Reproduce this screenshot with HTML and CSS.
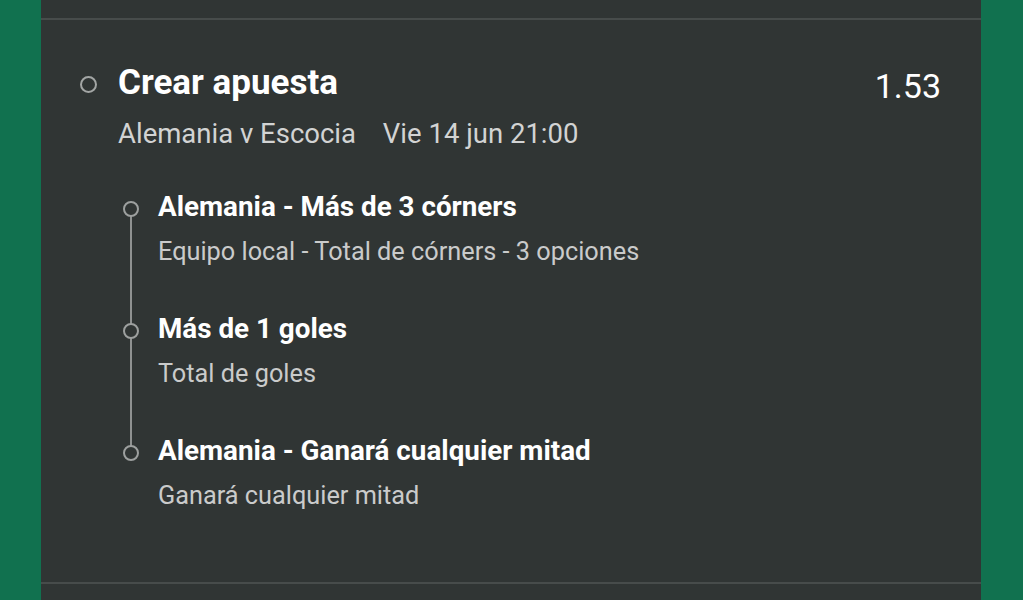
FILE: index.html
```html
<!DOCTYPE html>
<html lang="es">
<head>
    <meta charset="UTF-8">
    <meta name="viewport" content="width=device-width, initial-scale=1.0">
    <title>Crear apuesta</title>
    <link rel="stylesheet" href="styles.css">
</head>
<body>
  <div id="slip">
    <div class="slip-rule"></div>

    <div class="bet">
      <div class="bet-head">
        <span class="bet-dot"></span>
        <div class="bet-info">
          <h1 class="bet-title">Crear apuesta</h1>
          <div class="bet-event">
            <span>Alemania v Escocia</span>
            <span class="bet-date">Vie 14 jun 21:00</span>
          </div>
        </div>
        <div class="bet-odds">1.53</div>
      </div>

      <ul class="legs">
        <li class="leg">
          <div class="leg-title">Alemania - Más de 3 córners</div>
          <div class="leg-market">Equipo local - Total de córners - 3 opciones</div>
        </li>
        <li class="leg">
          <div class="leg-title">Más de 1 goles</div>
          <div class="leg-market">Total de goles</div>
        </li>
        <li class="leg">
          <div class="leg-title">Alemania - Ganará cualquier mitad</div>
          <div class="leg-market">Ganará cualquier mitad</div>
        </li>
      </ul>
    </div>

    <div class="slip-rule"></div>
  </div>
</body>
</html>
```

FILE: styles.css
```css
body {
    font-family: Roboto, "Noto Sans", Arial, sans-serif;
    background-color: #11714f;
    margin: 0;
    padding: 0;
}

#slip {
    width: 940px;
    height: 600px;
    margin-left: 41px;
    background-color: #303534;
    padding-top: 18px;
    box-sizing: border-box;
}

.slip-rule {
    height: 2px;
    background-color: #474c4b;
}

.bet {
    height: 562px;
    padding: 42px 40px 0 39px;
    box-sizing: border-box;
}

.bet-head {
    display: flex;
    align-items: flex-start;
}

.bet-dot {
    flex: none;
    width: 13px;
    height: 13px;
    border: 2px solid #a3a6a5;
    border-radius: 50%;
    margin-top: 14px;
    margin-right: 21px;
}

.bet-info {
    flex: 1;
}

.bet-title {
    margin: 0;
    color: #fff;
    font-size: 35px;
    font-weight: 700;
    line-height: 42px;
}

.bet-event {
    margin-top: 13px;
    color: #d2d3d3;
    font-size: 27.5px;
    line-height: 34px;
}

.bet-date {
    margin-left: 20px;
}

.bet-odds {
    color: #fff;
    font-size: 34px;
    line-height: 40px;
    margin-top: 4px;
}

/* selections of the bet builder, joined by a timeline */
.legs {
    list-style: none;
    position: relative;
    margin: 39px 0 0 38px;
    padding: 0 0 0 40px;
}

.legs::before {
    content: "";
    position: absolute;
    left: 12px;
    top: 19px;
    bottom: 59px;
    width: 2px;
    background-color: #8f9291;
}

.leg {
    position: relative;
    margin-bottom: 44px;
}

.leg:last-child {
    margin-bottom: 0;
}

.leg::before {
    content: "";
    position: absolute;
    left: -35px;
    top: 11px;
    width: 12px;
    height: 12px;
    border: 2px solid #9da09f;
    border-radius: 50%;
    background-color: #303534;
    z-index: 1;
}

.leg-title {
    color: #fff;
    font-size: 27.8px;
    font-weight: 700;
    line-height: 34px;
}

.leg-market {
    margin-top: 12px;
    color: #cacbcb;
    font-size: 25.3px;
    line-height: 32px;
}
```
